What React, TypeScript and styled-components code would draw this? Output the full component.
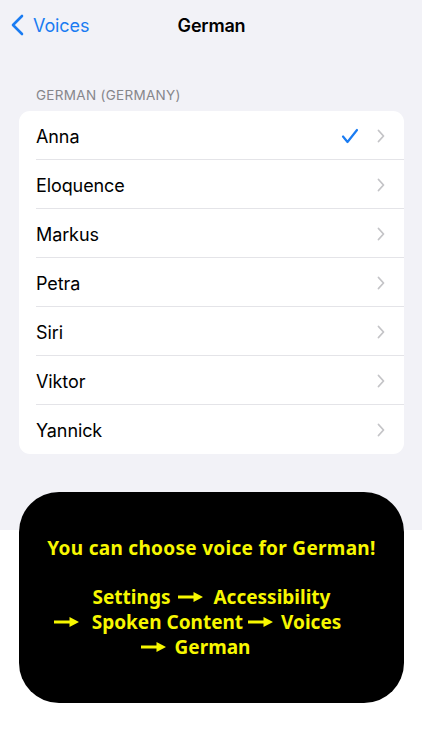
import styled, { createGlobalStyle } from "styled-components";

const Global = createGlobalStyle`
  html, body {
    margin: 0;
    padding: 0;
  }
  body {
    font-family: "Inter", "Liberation Sans", sans-serif;
    -webkit-font-smoothing: antialiased;
  }
`;

const Screen = styled.div`
  width: 422px;
  height: 750px;
  overflow: hidden;
  background: linear-gradient(#f2f2f7 0, #f2f2f7 530px, #ffffff 530px);
  display: flex;
  flex-direction: column;
`;

const NavBar = styled.div`
  height: 50px;
  display: grid;
  grid-template-columns: 1fr auto 1fr;
  align-items: center;
  padding: 0 10px 0 11px;
`;

const BackButton = styled.div`
  display: flex;
  align-items: center;
  gap: 9px;
  color: #1a7cf2;
  font-size: 18px;
  letter-spacing: -0.1px;
`;

const Title = styled.div`
  font-size: 18px;
  font-weight: 600;
  color: #000;
  letter-spacing: -0.2px;
`;

const SectionHeader = styled.div`
  margin: 37px 0 0 36px;
  font-size: 13.5px;
  color: #86868b;
  letter-spacing: 0.3px;
  height: 17px;
  line-height: 17px;
`;

const List = styled.div`
  margin: 7px 18px 0 19px;
  background: #fff;
  border-radius: 11px;
  overflow: hidden;
`;

const Row = styled.div`
  height: 49px;
  display: flex;
  align-items: center;
  padding-left: 17px;
  position: relative;
  &:not(:last-child)::after {
    content: "";
    position: absolute;
    left: 17px;
    right: 0;
    bottom: 0;
    height: 1px;
    background: #e4e4e8;
  }
`;

const Name = styled.div`
  flex: 1;
  font-size: 18px;
  color: #000;
  letter-spacing: -0.1px;
  padding-top: 1px;
`;

const Check = styled.div`
  width: 20px;
  display: flex;
  justify-content: center;
  margin-right: 16px;
`;

const Chevron = styled.div`
  width: 10px;
  margin-right: 18px;
  display: flex;
  justify-content: center;
`;

const Card = styled.div`
  margin: 38px 18px 0 19px;
  height: 211px;
  background: #000;
  border-radius: 40px;
  display: flex;
  flex-direction: column;
  align-items: center;
  padding-top: 44px;
  box-sizing: border-box;
  color: #f7f700;
  font-family: "Noto Sans", "Noto Sans CJK KR", sans-serif;
  font-weight: 700;
  font-size: 19px;
  text-align: center;
`;

const Headline = styled.div`
  line-height: 25px;
  letter-spacing: 0.3px;
`;

const Steps = styled.div`
  margin-top: 24px;
  display: flex;
  flex-direction: column;
  align-items: center;
`;

const StepLine = styled.div<{ $shift?: number }>`
  line-height: 25px;
  white-space: nowrap;
  margin-right: ${(p) => (p.$shift ?? 0) * 2}px;
`;

const ArrowIcon = styled.svg<{ $l: number; $r: number }>`
  display: inline-block;
  vertical-align: 1px;
  margin-left: ${(p) => p.$l}px;
  margin-right: ${(p) => p.$r}px;
`;

const Arrow = ({ l, r }: { l: number; r: number }) => (
  <ArrowIcon $l={l} $r={r} width="25" height="12" viewBox="0 0 25 12">
    <path d="M0 4.6h15.5V1L25 6l-9.5 5V7.4H0z" fill="#f7f700" />
  </ArrowIcon>
);

const voices = ["Anna", "Eloquence", "Markus", "Petra", "Siri", "Viktor", "Yannick"];

export default function App() {
  return (
    <Screen>
      <Global />
      <NavBar>
        <BackButton>
          <svg width="13" height="22" viewBox="0 0 13 22">
            <path d="M11 2L2 11l9 9" fill="none" stroke="#1a7cf2" strokeWidth="2.6" strokeLinecap="round" strokeLinejoin="round" />
          </svg>
          Voices
        </BackButton>
        <Title>German</Title>
        <div />
      </NavBar>
      <SectionHeader>GERMAN (GERMANY)</SectionHeader>
      <List>
        {voices.map((v, i) => (
          <Row key={v}>
            <Name>{v}</Name>
            <Check>
              {i === 0 && (
                <svg width="18" height="16" viewBox="0 0 18 16">
                  <path d="M2 8.5l4.5 5.5L16 2" fill="none" stroke="#1a7cf2" strokeWidth="2.2" strokeLinecap="round" strokeLinejoin="round" />
                </svg>
              )}
            </Check>
            <Chevron>
              <svg width="8" height="14" viewBox="0 0 8 14">
                <path d="M1.5 1.5L6.5 7l-5 5.5" fill="none" stroke="#c4c4c7" strokeWidth="1.8" strokeLinecap="round" strokeLinejoin="round" />
              </svg>
            </Chevron>
          </Row>
        ))}
      </List>
      <Card>
        <Headline>You can choose voice for German!</Headline>
        <Steps>
          <StepLine>
            Settings
            <Arrow l={8} r={10} />
            Accessibility
          </StepLine>
          <StepLine $shift={14}>
            <Arrow l={0} r={13} />
            Spoken Content
            <Arrow l={5} r={8} />
            Voices
          </StepLine>
          <StepLine $shift={16}>
            <Arrow l={0} r={9} />
            German
          </StepLine>
        </Steps>
      </Card>
    </Screen>
  );
}
